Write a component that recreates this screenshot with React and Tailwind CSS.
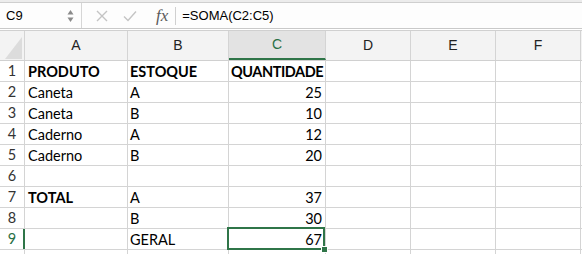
import React from 'react'

const cols = [
  { key: 'A', w: 'w-[103px]' },
  { key: 'B', w: 'w-[101px]' },
  { key: 'C', w: 'w-[97px]' },
  { key: 'D', w: 'w-[85px]' },
  { key: 'E', w: 'w-[85px]' },
  { key: 'F', w: 'w-[85px]' },
]

const rows = [
  { n: 1, a: 'PRODUTO', b: 'ESTOQUE', c: 'QUANTIDADE', boldA: true, boldB: true, boldC: true, textC: true },
  { n: 2, a: 'Caneta', b: 'A', c: '25' },
  { n: 3, a: 'Caneta', b: 'B', c: '10' },
  { n: 4, a: 'Caderno', b: 'A', c: '12' },
  { n: 5, a: 'Caderno', b: 'B', c: '20' },
  { n: 6, a: '', b: '', c: '' },
  { n: 7, a: 'TOTAL', b: 'A', c: '37', boldA: true },
  { n: 8, a: '', b: 'B', c: '30' },
  { n: 9, a: '', b: 'GERAL', c: '67', active: true },
]

function FormulaBar() {
  return (
    <div className="h-[26px] flex items-center bg-[#fdfdfd] border-b border-[#c9c9c9] font-['Liberation_Sans',sans-serif] text-[13px] text-black">
      <div className="w-[82px] h-full flex items-center justify-between pl-[6px] pr-[7px] border-r border-[#d6d6d6]">
        <span>C9</span>
        <svg width="7" height="16" viewBox="0 0 7 16">
          <path d="M3.5 2 L6.5 6.5 L0.5 6.5 Z" fill="#8a8a8a" />
          <path d="M3.5 14 L6.5 9.5 L0.5 9.5 Z" fill="#8a8a8a" />
        </svg>
      </div>
      <div className="flex items-center h-full">
        <svg className="ml-[14px]" width="12" height="12" viewBox="0 0 12 12">
          <path d="M1 1 L11 11 M11 1 L1 11" stroke="#c4c4c4" strokeWidth="1.4" />
        </svg>
        <svg className="ml-[15px]" width="14" height="12" viewBox="0 0 14 12">
          <path d="M1 6.5 L5 10.5 L13 1.5" stroke="#c4c4c4" strokeWidth="1.4" fill="none" />
        </svg>
        <span className="ml-[19px] font-['Liberation_Serif',serif] italic text-[17px] text-[#5a5a5a] leading-none">fx</span>
        <div className="ml-[7px] h-[18px] border-l border-[#d0d0d0]" />
        <span className="ml-[6px]">=SOMA(C2:C5)</span>
      </div>
    </div>
  )
}

function HeaderRow() {
  return (
    <div className="flex h-[30px] bg-[#f3f3f3] border-b border-[#d0d0d0] font-['Liberation_Sans',sans-serif] text-[14px] text-[#222]">
      <div className="w-[25px] h-full border-r border-[#d4d4d4] flex items-end justify-end pr-[1px] pb-[1px]">
        <svg width="18" height="22" viewBox="0 0 18 22">
          <path d="M17 0 L17 22 L0 22 Z" fill="#dcdcdc" />
        </svg>
      </div>
      {cols.map(c => (
        <div
          key={c.key}
          className={`${c.w} h-full border-r border-[#d4d4d4] flex items-center justify-center ${c.key === 'C' ? 'bg-[#e3e3e3] text-[#2a7045] border-b-2 border-b-[#2f7548]' : ''}`}
        >
          {c.key}
        </div>
      ))}
    </div>
  )
}

function Row({ r }) {
  return (
    <div className="flex h-[21px] border-b border-[#d4d4d4] font-['Lato',sans-serif] text-[14.5px] text-black leading-none">
      <div className={`w-[25px] h-full flex items-center justify-center pt-[1px] border-r ${r.active ? 'border-r-2 border-[#2f7548] text-[#2a7045] pl-[1px]' : 'border-[#d4d4d4] text-[#333]'}`}>
        {r.n}
      </div>
      <div className={`w-[103px] h-full border-r border-[#d4d4d4] flex items-center pl-[3px] pt-[2px] ${r.boldA ? 'font-bold' : ''}`}>{r.a}</div>
      <div className={`w-[101px] h-full border-r border-[#d4d4d4] flex items-center pl-[2px] pt-[2px] ${r.boldB ? 'font-bold' : ''}`}>{r.b}</div>
      <div className={`w-[97px] h-full border-r border-[#d4d4d4] flex items-center pt-[2px] whitespace-nowrap overflow-hidden ${r.textC ? 'justify-start pl-[2px] tracking-[-0.45px]' : 'justify-end pr-[3px]'} ${r.boldC ? 'font-bold' : ''}`}>{r.c}</div>
      <div className="w-[85px] h-full border-r border-[#d4d4d4]" />
      <div className="w-[85px] h-full border-r border-[#d4d4d4]" />
      <div className="w-[85px] h-full border-r border-[#d4d4d4]" />
    </div>
  )
}

export default function App() {
  return (
    <div className="w-[582px] h-[263px] bg-white overflow-hidden">
      <div className="h-[2px] bg-[#ececec]" />
      <div className="border-t border-[#cfcfcf]" />
      <FormulaBar />
      <div className="h-[1px] bg-white" />
      <div className="border-t border-[#d0d0d0]" />
      <HeaderRow />
      <div className="relative">
        {rows.map(r => <Row key={r.n} r={r} />)}
        <div className="flex h-[4px]">
          <div className="w-[25px] border-r border-[#d4d4d4]" />
          {cols.map(c => <div key={c.key} className={`${c.w} border-r border-[#d4d4d4]`} />)}
        </div>
        {/* active cell selection */}
        <div className="absolute left-[227px] top-[166px] w-[98px] h-[23px] border-2 border-[#2f7548]" />
        <div className="absolute left-[322px] top-[186px] w-[5px] h-[5px] bg-[#2f7548] border border-white box-content -ml-[1px] -mt-[1px]" />
      </div>
    </div>
  )
}
